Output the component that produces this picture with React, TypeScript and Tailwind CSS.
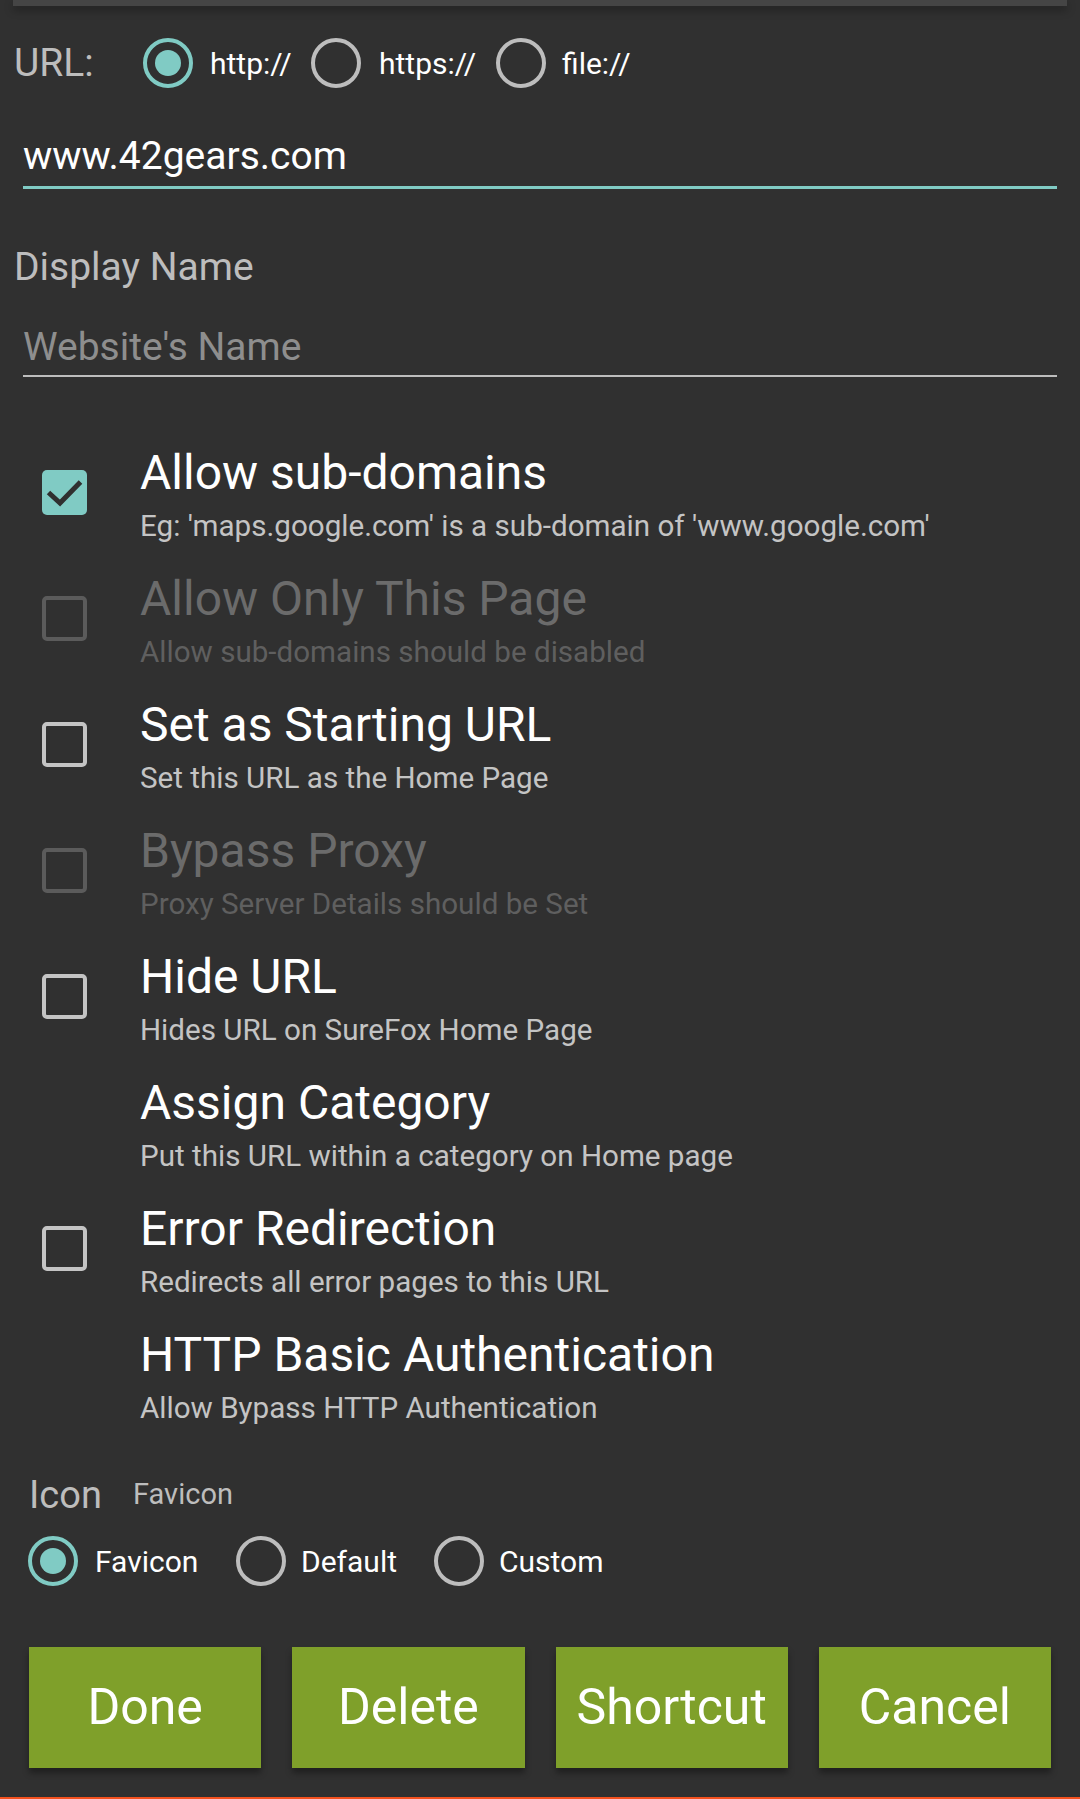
import React from "react";

const FONT = { fontFamily: "Roboto, 'Noto Sans', sans-serif" };

function Radio({ on }: { on?: boolean }) {
  return (
    <span
      className={
        "flex h-[50px] w-[50px] shrink-0 items-center justify-center rounded-full border-[4.5px] " +
        (on ? "border-[#80cbc4]" : "border-[#bdbdbd]")
      }
    >
      {on && <span className="h-[26px] w-[26px] rounded-full bg-[#80cbc4]" />}
    </span>
  );
}

function Check({ state }: { state: "on" | "off" | "disabled" | "none" }) {
  if (state === "none") return <span className="h-[45px] w-[45px] shrink-0" />;
  if (state === "on")
    return (
      <svg width="45" height="45" viewBox="0 0 45 45" className="shrink-0">
        <rect x="0" y="0" width="45" height="45" rx="5" fill="#80cbc4" />
        <path d="M6.5 22.5 L18 33 L38.5 12" fill="none" stroke="#303030" strokeWidth="5" />
      </svg>
    );
  return (
    <span
      className={
        "h-[45px] w-[45px] shrink-0 rounded-[5px] border-[4.5px] " +
        (state === "disabled" ? "border-[#5b5b5b]" : "border-[#c4c4c4]")
      }
    />
  );
}

const ROWS: { title: string; sub: string; box: "on" | "off" | "disabled" | "none" }[] = [
  { title: "Allow sub-domains", sub: "Eg: 'maps.google.com' is a sub-domain of 'www.google.com'", box: "on" },
  { title: "Allow Only This Page", sub: "Allow sub-domains should be disabled", box: "disabled" },
  { title: "Set as Starting URL", sub: "Set this URL as the Home Page", box: "off" },
  { title: "Bypass Proxy", sub: "Proxy Server Details should be Set", box: "disabled" },
  { title: "Hide URL", sub: "Hides URL on SureFox Home Page", box: "off" },
  { title: "Assign Category", sub: "Put this URL within a category on Home page", box: "none" },
  { title: "Error Redirection", sub: "Redirects all error pages to this URL", box: "off" },
  { title: "HTTP Basic Authentication", sub: "Allow Bypass HTTP Authentication", box: "none" },
];

export default function App() {
  return (
    <div className="flex h-[1799px] w-[1080px] flex-col bg-[#303030]" style={FONT}>
      <div className="mx-[13px] h-[6px] shrink-0 bg-[#454545] shadow-[0_4px_8px_rgba(0,0,0,0.35)]" />

      {/* url scheme */}
      <div className="mt-[32px] flex h-[50px] items-center pl-[14px]">
        <span className="w-[129px] shrink-0 text-[39px] leading-[46px] text-[#bdbdbd]">URL:</span>
        <Radio on />
        <span className="ml-[17px] w-[101px] shrink-0 text-[30px] text-white">http://</span>
        <Radio />
        <span className="ml-[18px] w-[117px] shrink-0 text-[30px] text-white">https://</span>
        <Radio />
        <span className="ml-[16px] text-[30px] text-white">file://</span>
      </div>

      <div className="mx-[23px] mt-[45px] border-b-[3px] border-[#80cbc4] pb-[7px] text-[39px] leading-[46px] text-white">
        www.42gears.com
      </div>

      <div className="mt-[55px] pl-[14px] text-[39px] leading-[46px] text-[#bdbdbd]">Display Name</div>
      <div className="mx-[23px] mt-[34px] border-b-2 border-[#bdbdbd] pb-[5px] text-[39px] leading-[46px] text-[#8e8e8e]">
        Website's Name
      </div>

      <div className="mt-[68px] flex flex-col gap-[27px]">
        {ROWS.map((r) => {
          const dis = r.box === "disabled";
          return (
            <div key={r.title} className="flex items-start">
              <div className="mt-[25px] flex w-[140px] justify-start pl-[42px]">
                <Check state={r.box} />
              </div>
              <div className="flex flex-col">
                <span className={"text-[48px] leading-[56px] " + (dis ? "text-[#6b6b6b]" : "text-white")}>
                  {r.title}
                </span>
                <span className={"mt-[7px] text-[29.6px] leading-[36px] " + (dis ? "text-[#5f5f5f]" : "text-[#c4c4c4]")}>
                  {r.sub}
                </span>
              </div>
            </div>
          );
        })}
      </div>

      <div className="mt-[46px] flex items-center pl-[29px]">
        <span className="w-[104px] text-[38px] leading-[46px] text-[#bdbdbd]">Icon</span>
        <span className="text-[29px] text-[#bdbdbd]">Favicon</span>
      </div>

      <div className="mt-[18px] flex h-[50px] items-center pl-[28px]">
        <Radio on />
        <span className="ml-[17px] w-[141px] shrink-0 text-[30px] text-white">Favicon</span>
        <Radio />
        <span className="ml-[15px] w-[133px] shrink-0 text-[30px] text-white">Default</span>
        <Radio />
        <span className="ml-[15px] text-[30px] text-white">Custom</span>
      </div>

      <div className="mt-[61px] grid grid-cols-4 gap-[31px] px-[29px]">
        {["Done", "Delete", "Shortcut", "Cancel"].map((b) => (
          <button
            key={b}
            className="flex h-[121px] items-center justify-center bg-[#7fa02a] text-[50px] text-white shadow-[0_5px_6px_rgba(0,0,0,0.35)]"
          >
            {b}
          </button>
        ))}
      </div>

      <div className="mt-auto h-[2px] shrink-0 bg-[#f4511e]" />
    </div>
  );
}
